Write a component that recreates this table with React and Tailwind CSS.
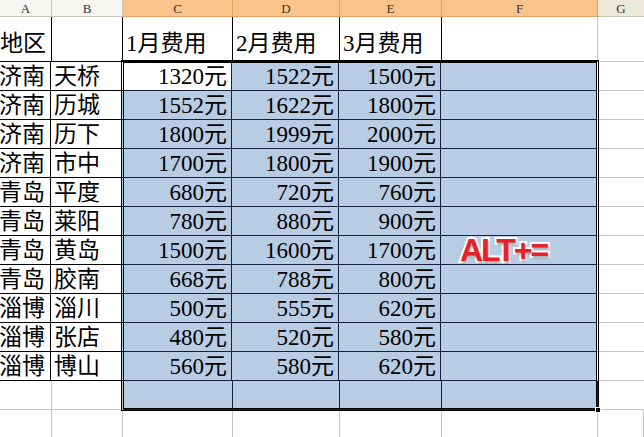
import React from 'react';

const COLS = ['w-[52px]', 'w-[71px]', 'w-[110px]', 'w-[107px]', 'w-[102px]', 'w-[156px]', 'flex-1'];

const rows = [
  ['济南', '天桥', 1320, 1522, 1500],
  ['济南', '历城', 1552, 1622, 1800],
  ['济南', '历下', 1800, 1999, 2000],
  ['济南', '市中', 1700, 1800, 1900],
  ['青岛', '平度', 680, 720, 760],
  ['青岛', '莱阳', 780, 880, 900],
  ['青岛', '黄岛', 1500, 1600, 1700],
  ['青岛', '胶南', 668, 788, 800],
  ['淄博', '淄川', 500, 555, 620],
  ['淄博', '张店', 480, 520, 580],
  ['淄博', '博山', 560, 580, 620],
];

const headCls = [
  'bg-[#f7f6f2] border-r border-b border-[#c9c6b8]',
  'bg-[#f7f6f2] border-r border-b border-[#c9c6b8]',
  'bg-[#f9c48c] border-r border-b border-[#e9a25c]',
  'bg-[#f9c48c] border-r border-b border-[#e9a25c]',
  'bg-[#f9c48c] border-r border-b border-[#e9a25c]',
  'bg-[#f9c48c] border-r border-b border-[#e9a25c]',
  'bg-[#ece9d8] border-b border-[#c9c6b8]',
];

const BLACK = 'bg-white border-r border-b border-black';
const SEL = 'bg-[#b8cce4] border-r border-b border-[#15223f]';
const GRID = 'bg-white border-r border-b border-[#c6c6c6]';

const App = () => {
  return (
    <div className="relative w-[644px] h-[437px] overflow-hidden bg-white font-['Liberation_Serif','Noto_Sans_CJK_SC',serif] text-[23px] text-black">
      {/* column headers */}
      <div className="flex h-[17px]">
        {['A', 'B', 'C', 'D', 'E', 'F', 'G'].map((c, i) => (
          <div key={c} className={`${COLS[i]} ${headCls[i]} flex items-center justify-center font-['Liberation_Serif',serif] text-[13px] leading-none text-[#333]`}>
            {c}
          </div>
        ))}
      </div>

      {/* title row */}
      <div className="flex h-[45px]">
        {['地区', '', '1月费用', '2月费用', '3月费用'].map((t, i) => (
          <div key={i} className={`${COLS[i]} ${BLACK} flex items-end pb-[5px] leading-[24px] ${i < 2 ? 'pl-0' : 'pl-[3px]'}`}>
            {t}
          </div>
        ))}
        <div className={`${COLS[5]} bg-white border-r border-b border-r-[#c6c6c6] border-b-black`} />
        <div className={`${COLS[6]} bg-white border-b border-[#c6c6c6]`} />
      </div>

      {/* data rows */}
      {rows.map((r, ri) => (
        <div key={ri} className="flex h-[29px]">
          <div className={`${COLS[0]} ${BLACK} flex items-center leading-none pt-[1px] -ml-[1px]`}>{r[0]}</div>
          <div className={`${COLS[1]} ${BLACK} flex items-center leading-none pt-[1px] pl-[3px]`}>{r[1]}</div>
          {[2, 3, 4].map((k) => (
            <div
              key={k}
              className={`${COLS[k]} ${ri === 0 && k === 2 ? 'bg-white border-r border-b border-[#15223f]' : SEL} flex items-center justify-end leading-none pt-[1px] pr-[4px]`}
            >
              {r[k]}元
            </div>
          ))}
          <div className={`${COLS[5]} ${SEL} flex items-center pl-[19px]`}>
            {ri === 6 && (
              <span className="font-['Liberation_Sans',sans-serif] font-bold text-[32px] leading-none tracking-[-2px] text-[#e4222c] [-webkit-text-stroke:4px_white] [paint-order:stroke_fill] [text-shadow:1px_2px_2px_rgba(0,0,0,0.35)]">
                ALT+=
              </span>
            )}
          </div>
          <div className={`${COLS[6]} bg-white border-b border-[#c6c6c6]`} />
        </div>
      ))}

      {/* empty row inside selection */}
      <div className="flex h-[29px]">
        <div className={`${COLS[0]} ${GRID}`} />
        <div className={`${COLS[1]} ${GRID}`} />
        <div className={`${COLS[2]} ${SEL}`} />
        <div className={`${COLS[3]} ${SEL}`} />
        <div className={`${COLS[4]} ${SEL}`} />
        <div className={`${COLS[5]} ${SEL}`} />
        <div className={`${COLS[6]} bg-white border-b border-[#c6c6c6]`} />
      </div>

      {/* last visible row */}
      <div className="flex h-[29px]">
        {COLS.map((c, i) => (
          <div key={i} className={`${c} ${GRID}`} />
        ))}
      </div>

      {/* selection outline + fill handle */}
      <div className="absolute left-[121px] top-[60px] w-[478px] h-[351px] border-[3px] border-double border-black pointer-events-none" />
      <div className="absolute left-[595px] top-[407px] w-[6px] h-[6px] bg-black border border-white pointer-events-none" />
    </div>
  );
};

export default App;
